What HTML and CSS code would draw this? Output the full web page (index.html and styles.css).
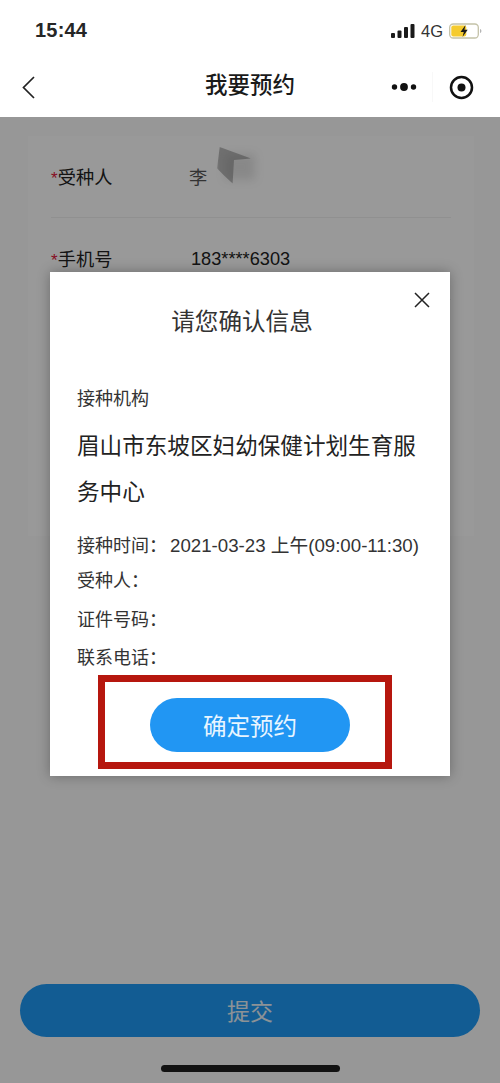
FILE: index.html
```html
<!DOCTYPE html>
<html lang="zh-CN">
<head>
<meta charset="utf-8">
<title>我要预约</title>
<link rel="stylesheet" href="styles.css">
</head>
<body>
<div class="page">
  <header class="top">
    <div class="status">
      <span class="time">15:44</span>
      <div class="status-right">
        <svg class="signal" width="24" height="16" viewBox="0 0 24 16"><rect x="0" y="10" width="4" height="5" rx="1"/><rect x="6.500" y="7.500" width="4" height="7.500" rx="1"/><rect x="13" y="4" width="4" height="11" rx="1"/><rect x="19.500" y="1" width="4" height="14" rx="1"/></svg>
        <span class="net">4G</span>
        <svg class="battery" width="33" height="16" viewBox="0 0 33 16"><rect x="0.700" y="1" width="28.600" height="14" rx="3.500" fill="#fff" stroke="#c4c2a8" stroke-width="1.300"/><rect x="2.300" y="2.600" width="15" height="10.800" rx="2" fill="#f5cb2f"/><path d="M31 6v4c1-.3 1.400-1 1.400-2s-.4-1.700-1.400-2z" fill="#b5b5b5"/><path d="M16.500 2 11.500 9h3.300l-1.300 5 5.200-7.200h-3.300z" fill="#1a1a1a"/></svg>
      </div>
    </div>
    <nav class="nav">
      <svg class="back" width="13" height="23" viewBox="0 0 13 23"><path d="M12 1 1.500 11.500 12 22" fill="none" stroke="#222" stroke-width="1.700"/></svg>
      <h1 class="nav-title">我要预约</h1>
      <div class="capsule">
        <svg class="more" width="26" height="10" viewBox="0 0 26 10"><circle cx="3.500" cy="5" r="2.700"/><circle cx="13" cy="5" r="3.900"/><circle cx="22.500" cy="5" r="2.700"/></svg>
        <span class="capsule-line"></span>
        <svg class="target" width="25" height="25" viewBox="0 0 25 25"><circle cx="12.500" cy="12.500" r="10.500" fill="none" stroke="#111" stroke-width="2.500"/><circle cx="12.500" cy="12.500" r="4" fill="#111"/></svg>
      </div>
    </nav>
  </header>

  <main class="main">
    <form class="form">
      <div class="row">
        <span class="label"><i class="req">*</i>受种人</span>
        <span class="value name">李<span class="smudge"></span></span>
      </div>
      <div class="row">
        <span class="label"><i class="req">*</i>手机号</span>
        <span class="value phone">183****6303</span>
      </div>
    </form>
    <div class="footer">
      <button class="submit" type="button">提交</button>
      <span class="home"></span>
    </div>

    <div class="overlay"></div>

    <section class="modal">
      <svg class="close" width="18" height="18" viewBox="0 0 18 18"><path d="M2 2l14 14M16 2 2 16" stroke="#222" stroke-width="1.500" fill="none"/></svg>
      <h2 class="modal-title">请您确认信息</h2>
      <p class="org-label">接种机构</p>
      <p class="org-name">眉山市东坡区妇幼保健计划生育服务中心</p>
      <dl class="details">
        <div class="detail"><dt>接种时间：</dt><dd>2021-03-23 上午(09:00-11:30)</dd></div>
        <div class="detail"><dt>受种人：</dt><dd></dd></div>
        <div class="detail"><dt>证件号码：</dt><dd></dd></div>
        <div class="detail"><dt>联系电话：</dt><dd></dd></div>
      </dl>
      <div class="confirm-wrap">
        <button class="confirm" type="button">确定预约</button>
      </div>
    </section>
  </main>
</div>
</body>
</html>
```
FILE: styles.css
```css
* { box-sizing: border-box; }
html, body { margin: 0; padding: 0; }
body {
  width: 500px;
  height: 1083px;
  overflow: hidden;
  background: #fff;
  color: #222;
  font-family: "Liberation Sans", "Noto Sans CJK SC", sans-serif;
}
.page { display: flex; flex-direction: column; height: 1083px; }

.top { height: 117px; background: #fff; flex: none; }
.status {
  height: 60px;
  padding: 19px 18px 0 35px;
  display: flex;
  justify-content: space-between;
  align-items: flex-start;
}
.time { font-size: 20px; line-height: 24px; font-weight: 700; color: #262626; letter-spacing: .2px; margin-top: -1px; }
.status-right { display: flex; align-items: center; gap: 6px; height: 24px; }
.signal { fill: #1a1a1a; }
.net { font-size: 16.500px; line-height: 24px; color: #333; }

.nav {
  height: 57px;
  display: flex;
  align-items: center;
  position: relative;
  padding: 0 26px 3px 22px;
  justify-content: space-between;
}
.nav-title {
  position: absolute;
  left: 0;
  right: 0;
  top: 10px;
  margin: 0;
  text-align: center;
  font-size: 22.500px;
  line-height: 32px;
  font-weight: 500;
  color: #1a1a1a;
}
.capsule { display: flex; align-items: center; position: relative; }
.more { fill: #111; margin-right: 15px; }
.capsule-line { width: 1px; height: 30px; background: #f8f8f8; margin-right: 16px; }

.main { flex: 1; position: relative; display: flex; flex-direction: column; background: #fcfcfc; }
.form { margin: 19px 26px 0 28px; padding: 0 23px; background: #fff; height: 400px; flex: none; }
.row { height: 82px; display: flex; align-items: center; border-bottom: 1px solid #f0f0f0; font-size: 18.200px; }
.label { width: 140px; color: #222; letter-spacing: .1px; margin-bottom: 2px; }
.req { color: #e2183c; font-style: normal; font-size: 17px; }
.value { color: #222; }
.phone { margin-top: 2px; }
.name { color: #555; position: relative; margin-bottom: 2px; margin-left: -2px; }
.smudge { position: absolute; left: 24px; top: -17px; width: 46px; height: 42px; }
.smudge::before {
  content: "";
  position: absolute;
  left: 4px;
  top: 0;
  width: 34px;
  height: 38px;
  background: #777;
  opacity: .5;
  clip-path: polygon(8% 4%, 100% 34%, 50% 38%, 46% 100%, 20% 78%, 0 60%);
  filter: blur(.8px);
}
.smudge::after {
  content: "";
  position: absolute;
  left: 12px;
  top: 8px;
  width: 30px;
  height: 26px;
  background: #777;
  opacity: .2;
  filter: blur(5px);
}

.footer { flex: none; height: 99px; padding: 0 20px; margin-top: auto; display: flex; flex-direction: column; align-items: center; }
.submit {
  width: 460px;
  height: 53px;
  border: 0;
  border-radius: 27px;
  background: #1e9af5;
  color: #eaf4fb;
  font: inherit;
  font-size: 23px;
  padding: 0 0 2px;
}
.home { width: 179px; height: 7px; margin-top: 28px; border-radius: 4px; background: #1f1f1f; }

.overlay { position: absolute; inset: 0; background: rgba(0, 0, 0, .4); }

.modal {
  position: absolute;
  left: 50px;
  top: 155px;
  width: 400px;
  height: 504px;
  background: #fff;
  padding: 0 27px;
  box-shadow: 0 0 12px rgba(0, 0, 0, .3);
}
.close { position: absolute; right: 19px; top: 19px; }
.modal-title { margin: 34px 0 0; padding-right: 16px; text-align: center; font-size: 23.600px; line-height: 32px; font-weight: 400; color: #333; }
.org-label { margin: 48px 0 0; font-size: 18px; line-height: 26px; color: #333; }
.org-name { margin: 12px 0 0; font-size: 22.600px; line-height: 46px; color: #222; }
.details { margin: 12px 0 0; font-size: 18px; color: #333; }
.detail { display: flex; height: 36px; line-height: 36px; align-items: baseline; white-space: nowrap; }
.detail:nth-child(2) { margin-top: -1px; }
.detail:nth-child(3) { margin-top: 3px; }
.detail:nth-child(4) { margin-top: 2px; }
.detail dt { flex: none; }
.detail dd { margin: 0 0 0 3px; font-size: 18.700px; }
.confirm-wrap {
  position: absolute;
  left: 48px;
  top: 403px;
  width: 294px;
  height: 94px;
  border: 7px solid #b6170e;
  display: flex;
  align-items: center;
  justify-content: center;
}
.confirm {
  width: 200px;
  height: 54px;
  margin: 6px 0 0 10px;
  border: 0;
  border-radius: 27px;
  background: #2196f3;
  color: #e8f5ff;
  font: inherit;
  font-size: 23.500px;
  padding: 0;
}
```
